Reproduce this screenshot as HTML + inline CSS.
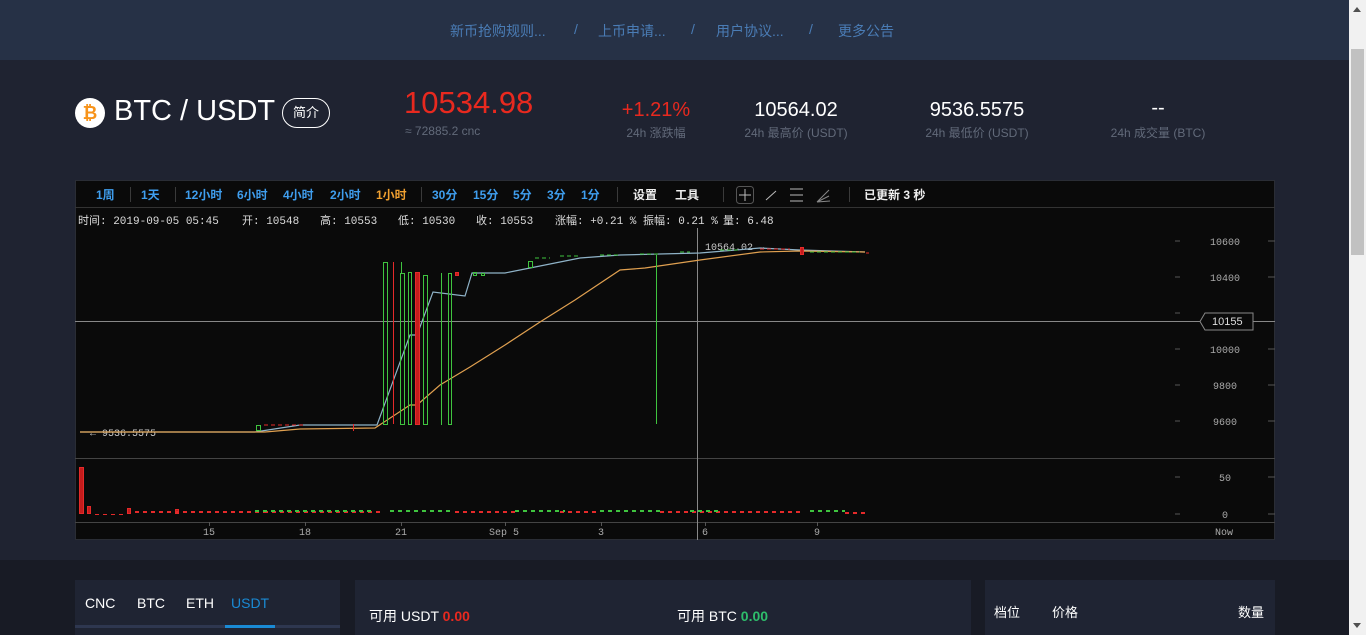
<!DOCTYPE html>
<html><head><meta charset="utf-8"><style>
*{margin:0;padding:0;box-sizing:border-box}
body{width:1366px;height:635px;overflow:hidden;background:#181b25;font-family:"Liberation Sans","Noto Sans CJK SC",sans-serif;position:relative}
.a{position:absolute;white-space:nowrap}
#nav{position:absolute;left:0;top:0;width:1349px;height:60px;background:#263146}
#nav span{position:absolute;top:21px;font-size:14px;color:#4a7cb5}
#main{position:absolute;left:0;top:60px;width:1349px;height:500px;background:#1f2331}
.lbl{font-size:12px;color:#626a7a;transform:translateX(-50%)}
.val{font-size:20px;color:#fff;transform:translateX(-50%)}
.tb{font-size:12px;font-weight:bold;color:#3f9eee;top:186px}
.sep{position:absolute;top:187px;width:1px;height:15px;background:#3a3a3a}
.inf{font-family:"Liberation Mono","Noto Sans CJK SC",monospace;font-size:11px;color:#ddd;top:212px}
.ax{font-family:"Liberation Mono",monospace;font-size:10px;color:#aaa}
.pan{position:absolute;top:580px;height:55px;background:#1f2433}
</style></head><body>
<div id="nav">
<span style="left:450px">新币抢购规则...</span><span style="left:574px">/</span>
<span style="left:598px">上币申请...</span><span style="left:691px">/</span>
<span style="left:716px">用户协议...</span><span style="left:809px">/</span>
<span style="left:838px">更多公告</span>
</div>
<div id="main"></div>
<div class="a" style="left:75px;top:98px;width:30px;height:30px;border-radius:50%;background:#fff;text-align:center;line-height:30px;color:#f7931a;font-weight:bold;font-size:18px">₿</div>
<div class="a" style="left:114px;top:95px;font-size:29px;color:#fff">BTC / USDT</div>
<div class="a" style="left:282px;top:98px;width:48px;height:30px;border:1px solid #fff;border-radius:15px;color:#fff;font-size:13px;text-align:center;line-height:28px">简介</div>
<div class="a" style="left:404px;top:85px;font-size:31px;color:#e8291f">10534.98</div>
<div class="a" style="left:405px;top:124px;font-size:12px;color:#626a7a">≈ 72885.2 cnc</div>
<div class="a val" style="left:656px;top:99px;color:#e8291f">+1.21%</div>
<div class="a lbl" style="left:656px;top:124px">24h 涨跌幅</div>
<div class="a val" style="left:796px;top:99px">10564.02</div>
<div class="a lbl" style="left:796px;top:124px">24h 最高价 (USDT)</div>
<div class="a val" style="left:977px;top:99px">9536.5575</div>
<div class="a lbl" style="left:977px;top:124px">24h 最低价 (USDT)</div>
<div class="a val" style="left:1158px;top:97px">--</div>
<div class="a lbl" style="left:1158px;top:124px">24h 成交量 (BTC)</div>

<div class="a" style="left:75px;top:180px;width:1200px;height:360px;background:#0a0a0a;border:1px solid #2a2d35"></div>
<div class="a" style="left:75px;top:207px;width:1200px;height:1px;background:#333"></div>
<div class="a tb" style="left:96px">1周</div><div class="sep" style="left:130px"></div>
<div class="a tb" style="left:141px">1天</div><div class="sep" style="left:175px"></div>
<div class="a tb" style="left:185px">12小时</div>
<div class="a tb" style="left:237px">6小时</div>
<div class="a tb" style="left:283px">4小时</div>
<div class="a tb" style="left:330px">2小时</div>
<div class="a tb" style="left:376px;color:#f0a030">1小时</div><div class="sep" style="left:421px"></div>
<div class="a tb" style="left:432px">30分</div>
<div class="a tb" style="left:473px">15分</div>
<div class="a tb" style="left:513px">5分</div>
<div class="a tb" style="left:547px">3分</div>
<div class="a tb" style="left:581px">1分</div><div class="sep" style="left:617px"></div>
<div class="a tb" style="left:633px;color:#eee">设置</div>
<div class="a tb" style="left:675px;color:#eee">工具</div><div class="sep" style="left:723px"></div>
<div class="sep" style="left:849px"></div>
<div class="a tb" style="left:864px;color:#eee">已更新 3 秒</div>
<svg class="a" style="left:735px;top:185px" width="100" height="20" viewBox="0 0 100 20" fill="none" stroke="#bbb" stroke-width="1">
<rect x="1.5" y="1.5" width="17" height="17" rx="3" stroke="#555"/><path d="M10 4v12M4 10h12"/>
<path d="M31 15l10-9"/><path d="M55 4h13M55 10h13M55 16h13"/><path d="M82 17l12-12M82 17l12-6M82 17l13-1" stroke="#888"/>
</svg>
<div class="a inf" style="left:78px">时间: 2019-09-05 05:45</div>
<div class="a inf" style="left:242px">开: 10548</div>
<div class="a inf" style="left:320px">高: 10553</div>
<div class="a inf" style="left:398px">低: 10530</div>
<div class="a inf" style="left:476px">收: 10553</div>
<div class="a inf" style="left:555px">涨幅: +0.21 %</div>
<div class="a inf" style="left:643px">振幅: 0.21 %</div>
<div class="a inf" style="left:723px">量: 6.48</div>

<svg class="a" style="left:75px;top:228px" width="1200" height="312" viewBox="75 228 1200 312" fill="none">
<line x1="75" y1="458.5" x2="1275" y2="458.5" stroke="#444"/>
<line x1="75" y1="522.5" x2="1275" y2="522.5" stroke="#444"/>
<line x1="75" y1="321.5" x2="1275" y2="321.5" stroke="#888"/>
<line x1="697.5" y1="228" x2="697.5" y2="540" stroke="#888"/>
<g stroke="#555"><path d="M1175 241h5M1175 277h5M1175 313h5M1175 349h5M1175 385h5M1175 421h5M1175 477h5M1175 514h5M1268 241h7M1268 277h7M1268 349h7M1268 385h7M1268 421h7M1268 477h7M1268 514h7"/>
<path d="M209.5 522v4M305.5 522v4M401.5 522v4M505.5 522v4M601.5 522v4M705.5 522v4M817.5 522v4"/></g>
<g class="ax" fill="#aaa" font-family="Liberation Mono,monospace" font-size="10">
<text x="1210" y="245">10600</text><text x="1210" y="281">10400</text><text x="1210" y="353">10000</text><text x="1213" y="389">9800</text><text x="1213" y="425">9600</text>
<text x="1219" y="481">50</text><text x="1222" y="518">0</text>
<text x="203" y="535">15</text><text x="299" y="535">18</text><text x="395" y="535">21</text><text x="489" y="535">Sep 5</text><text x="598" y="535">3</text><text x="702" y="535">6</text><text x="814" y="535">9</text><text x="1215" y="535">Now</text>
<text x="90" y="436" fill="#ccc">← 9536.5575</text><text x="705" y="250" fill="#ccc">10564.02 →</text>
</g>
<path d="M1205 313h48v17h-48l-5-8.5z" fill="#0a0a0a" stroke="#888"/>
<text x="1212" y="325" fill="#ddd" font-family="Liberation Sans" font-size="11">10155</text>
<!-- lines -->
<polyline stroke="#8fb3c8" stroke-width="1.2" points="80,432 255,432 300,425 377,425 410,335 417,335 433,292 465,296 472,273 505,273 530,268 580,258 620,255 700,253 760,248 800,250 865,252"/>
<polyline stroke="#e0a050" stroke-width="1.2" points="80,432 265,432 300,429 375,428 410,405 417,405 440,385 470,367 505,345 540,322 575,300 620,270 645,268 700,260 760,252 800,251 865,252"/>
<!-- candles -->
<g stroke="#3fc43f" stroke-width="1">
<rect x="383.5" y="262.5" width="4" height="162"/><rect x="400.5" y="273.5" width="4" height="151"/><rect x="408.5" y="272.5" width="3" height="152"/>
<rect x="423.5" y="275.5" width="4" height="149"/><line x1="441.5" y1="273" x2="441.5" y2="425"/><rect x="448.5" y="273.5" width="3" height="151"/>
<line x1="401.5" y1="262" x2="401.5" y2="273"/><line x1="656.5" y1="255" x2="656.5" y2="424"/>
<rect x="256.5" y="425.5" width="4" height="5"/><rect x="528.5" y="261.5" width="4" height="6"/><rect x="473.5" y="272.5" width="3" height="3"/><rect x="481.5" y="273.5" width="3" height="2"/>
<path d="M535 258h15M560 256h20M600 255h20M640 254h20M680 252h10M720 250h20M810 252h50" stroke-dasharray="4 3"/>
</g>
<g stroke="#e52a2a" fill="#c41c1c">
<line x1="393.5" y1="262" x2="393.5" y2="424"/><rect x="415.5" y="272.5" width="4" height="152"/>
<line x1="353.5" y1="424" x2="353.5" y2="431"/><rect x="455.5" y="272.5" width="3" height="3"/>
<rect x="800.5" y="247.5" width="3" height="7"/><path d="M264 425h40M760 249h30M866 253h3" stroke-dasharray="4 3"/>
</g>
<!-- volume -->
<rect x="79.5" y="467.5" width="4" height="46" fill="#c41c1c" stroke="#e52a2a"/>
<rect x="87.5" y="506.5" width="3" height="7" fill="#c41c1c" stroke="#e52a2a"/>
<path d="M95 514.5h30" stroke="#e52a2a" stroke-dasharray="4 4"/>
<g stroke="#e52a2a" fill="#c41c1c"><path d="M127.5 508.5h3v5h-3zM175.5 509.5h3v4h-3z"/>
<path d="M135 512h130M264 512h120M455 512h60M560 512h40M660 512h140M845 513h20" stroke-width="2" stroke-dasharray="4 4"/></g>
<g stroke="#3fc43f"><path d="M255 511h120M390 511h60M515 511h50M600 511h60M690 511h30M810 511h35" stroke-width="2" stroke-dasharray="4 4"/></g>
</svg>

<div class="pan" style="left:75px;width:265px"></div>
<div class="a" style="left:85px;top:595px;font-size:14px;color:#fff">CNC</div>
<div class="a" style="left:137px;top:595px;font-size:14px;color:#fff">BTC</div>
<div class="a" style="left:186px;top:595px;font-size:14px;color:#fff">ETH</div>
<div class="a" style="left:231px;top:595px;font-size:14px;color:#1a8ad4">USDT</div>
<div class="a" style="left:75px;top:625px;width:265px;height:3px;background:#2e3750"></div>
<div class="a" style="left:225px;top:625px;width:50px;height:3px;background:#1a8ad4"></div>
<div class="pan" style="left:355px;width:616px"></div>
<div class="a" style="left:369px;top:606px;font-size:14px;color:#fff">可用 USDT <span style="color:#e8291f;font-weight:bold">0.00</span></div>
<div class="a" style="left:677px;top:606px;font-size:14px;color:#fff">可用 BTC <span style="color:#2ebd6b;font-weight:bold">0.00</span></div>
<div class="pan" style="left:985px;width:290px"></div>
<div class="a" style="left:994px;top:602px;font-size:13px;color:#fff">档位</div>
<div class="a" style="left:1052px;top:602px;font-size:13px;color:#fff">价格</div>
<div class="a" style="left:1238px;top:602px;font-size:13px;color:#fff">数量</div>

<div class="a" style="left:1349px;top:0;width:17px;height:635px;background:#f1f1f1"></div>
<div class="a" style="left:1351px;top:49px;width:13px;height:206px;background:#c1c1c1"></div>
<div class="a" style="left:1353px;top:7px;width:0;height:0;border-left:4px solid transparent;border-right:4px solid transparent;border-bottom:5px solid #505050"></div>
<div class="a" style="left:1353px;top:623px;width:0;height:0;border-left:4px solid transparent;border-right:4px solid transparent;border-top:5px solid #505050"></div>
</body></html>
